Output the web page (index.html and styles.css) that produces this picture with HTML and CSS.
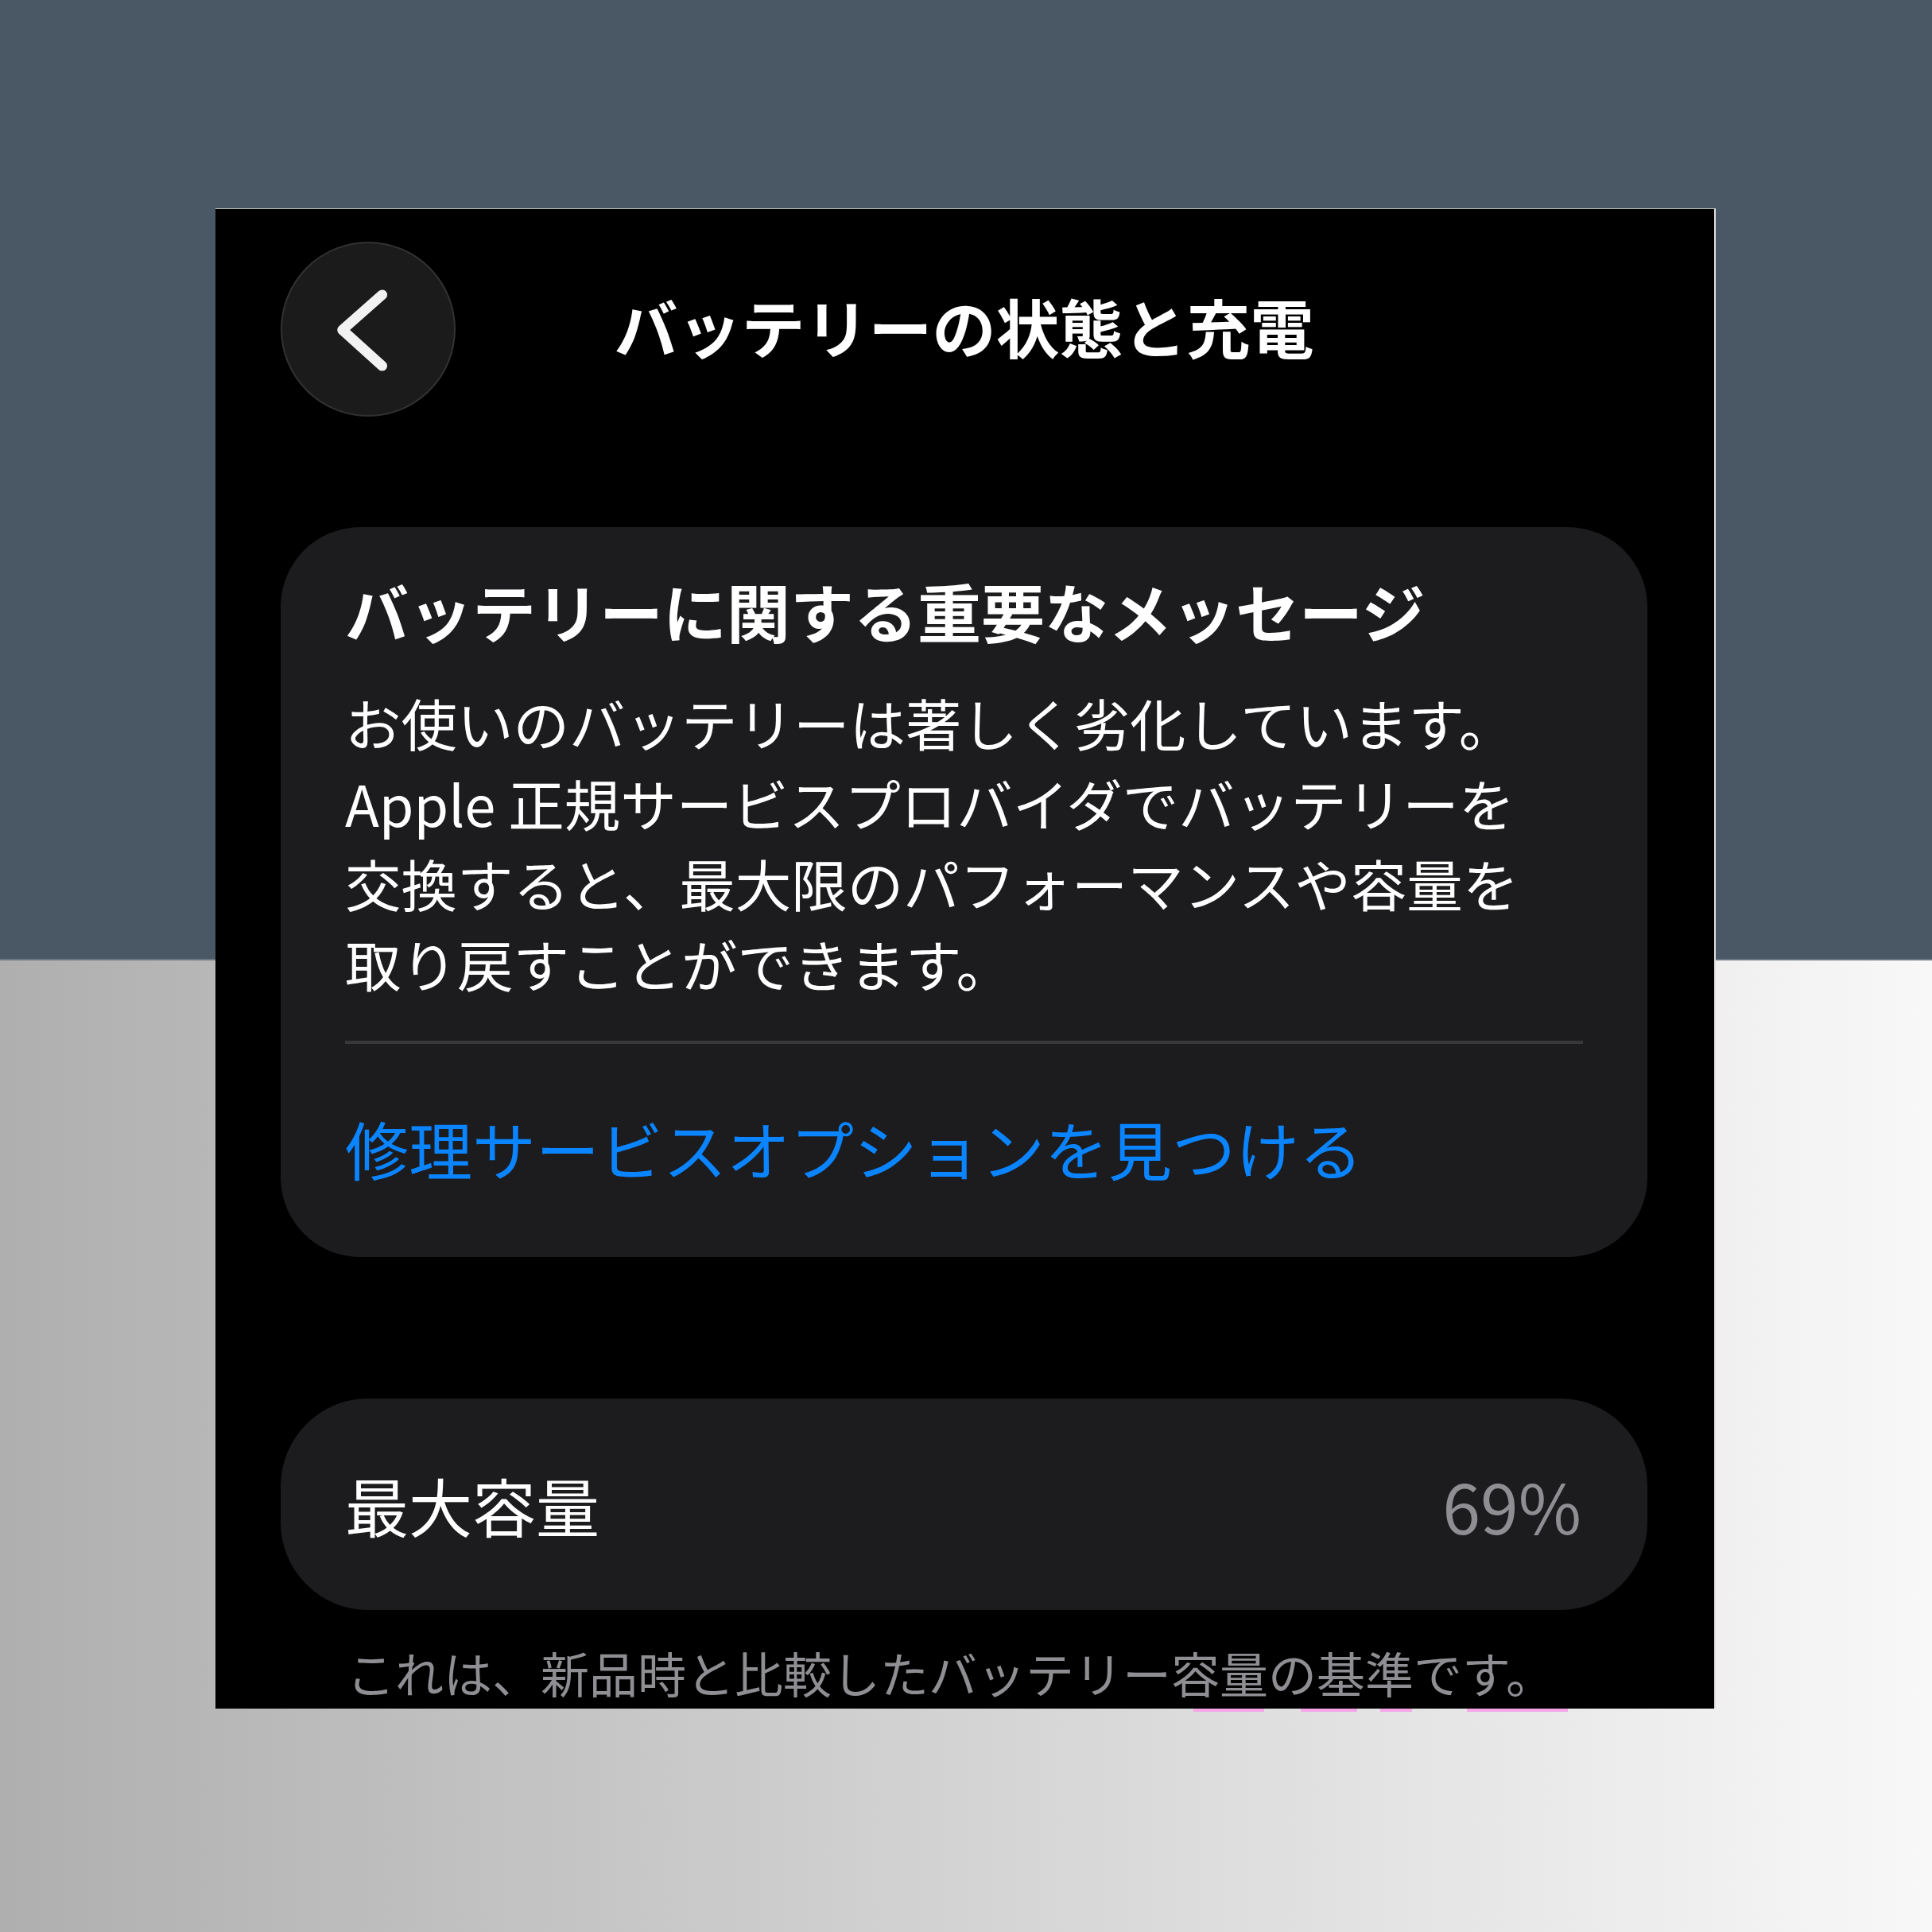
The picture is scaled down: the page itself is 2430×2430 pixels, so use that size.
FILE: index.html
```html
<!DOCTYPE html>
<html lang="ja">
<head>
    <meta charset="UTF-8">
    <meta name="viewport" content="width=device-width, initial-scale=1.0">
    <title>バッテリーの状態と充電</title>
    <link rel="stylesheet" href="styles.css">
</head>
<body>

    <div class="screen">
        <div class="nav">
            <button class="back-btn" aria-label="戻る">
                <svg width="220" height="220" viewBox="0 0 220 220">
                    <path d="M128 66 L77 111 L128 157" fill="none" stroke="#f2f2f2" stroke-width="13" stroke-linecap="round" stroke-linejoin="round"/>
                </svg>
            </button>
            <h1>バッテリーの状態と充電</h1>
            <div></div>
        </div>

        <div class="card message">
            <h2>バッテリーに関する重要なメッセージ</h2>
            <p>お使いのバッテリーは著しく劣化しています。<br>Apple 正規サービスプロバイダでバッテリーを<br>交換すると、最大限のパフォーマンスや容量を<br>取り戻すことができます。</p>
            <div class="divider"></div>
            <a class="link" href="#">修理サービスオプションを見つける</a>
        </div>

        <div class="card capacity">
            <span class="label">最大容量</span>
            <span class="value">69%</span>
        </div>
        <p class="note">これは、新品時と比較したバッテリー容量の基準です。</p>
    </div>

    <!-- bits of the next line showing under the cropped screenshot -->
    <div class="bleed">
        <span style="width:89px"></span>
        <span style="width:71px; margin-left:46px"></span>
        <span style="width:40px; margin-left:29px"></span>
        <span style="width:127px; margin-left:69px"></span>
    </div>

</body>
</html>
```

FILE: styles.css
```css
html, body {
    margin: 0;
    padding: 0;
}
body {
    width: 2430px;
    height: 2430px;
    overflow: hidden;
    font-family: "Noto Sans CJK JP", "Noto Sans", sans-serif;
    background:
        linear-gradient(#4a5866, #4a5866) top left / 100% 1206px no-repeat,
        linear-gradient(#6d7884, #6d7884) 0 1206px / 100% 2px no-repeat,
        linear-gradient(to right, #afafaf, #f8f8f8);
}
.screen {
    box-sizing: border-box;
    width: 1887px;
    height: 1887px;
    margin: 262px 0 0 271px;
    padding: 41px 84px 0 82px;
    background-color: #000;
    border-top: 1px solid #b9c4c0;
    border-right: 2px solid #e4dede;
    overflow: hidden;
    color: #fff;
}
.nav {
    display: grid;
    grid-template-columns: 1fr auto 1fr;
    align-items: center;
    height: 220px;
}
.back-btn {
    box-sizing: border-box;
    width: 220px;
    height: 220px;
    padding: 0;
    border-radius: 50%;
    border: 2px solid #323234;
    background-color: #1b1b1b;
    display: flex;
    align-items: center;
    justify-content: center;
    cursor: pointer;
}
.back-btn svg {
    display: block;
}
.nav h1 {
    margin: 0;
    padding-bottom: 10px;
    font-size: 80px;
    line-height: 100px;
    font-weight: 700;
}
.card {
    background-color: #1c1c1e;
    border-radius: 100px;
}
.message {
    margin-top: 139px;
    padding: 54px 81px 88px 81px;
}
.message h2 {
    margin: 0;
    font-size: 80px;
    line-height: 100px;
    font-weight: 700;
    white-space: nowrap;
}
.message p {
    margin: 41px 0 0 0;
    font-size: 70.5px;
    line-height: 101px;
    white-space: nowrap;
}
.divider {
    height: 4px;
    margin-top: 47px;
    background-color: #38383a;
}
.link {
    display: block;
    margin-top: 80px;
    font-size: 80px;
    line-height: 100px;
    color: #0a84ff;
    text-decoration: none;
    white-space: nowrap;
}
.capacity {
    margin-top: 178px;
    height: 266px;
    padding: 0 83px 0 81px;
    border-radius: 110px;
    display: flex;
    align-items: center;
    justify-content: space-between;
    font-size: 80px;
}
.value {
    color: #8e8e93;
    font-size: 86px;
}
.note {
    margin: 39px 0 0 83px;
    font-size: 61px;
    line-height: 80px;
    color: #8e8e93;
    white-space: nowrap;
}
.bleed {
    display: flex;
    height: 4px;
    margin-left: 1501px;
}
.bleed span {
    display: block;
    height: 4px;
    background-color: #f4a6e6;
}
```
